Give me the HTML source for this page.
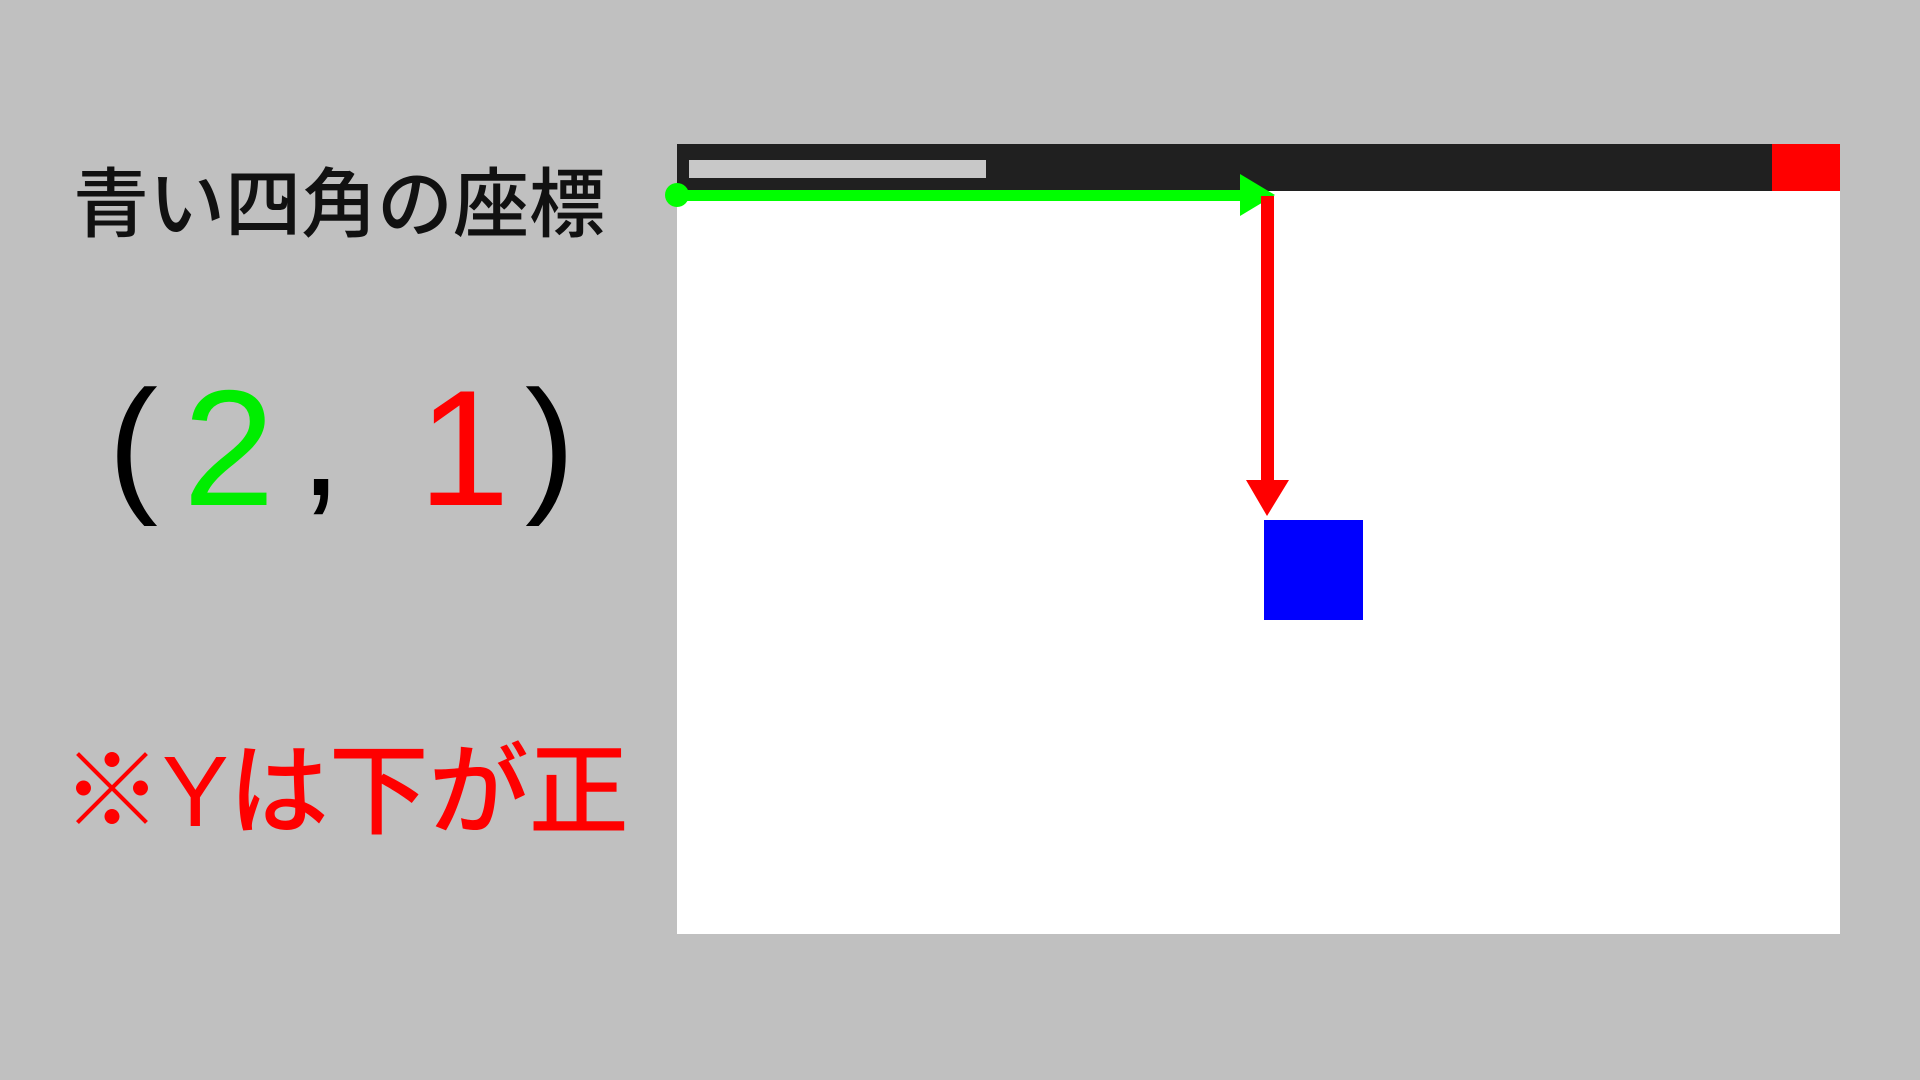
<!DOCTYPE html>
<html><head><meta charset="utf-8"><style>
html,body{margin:0;padding:0;}
body{width:1920px;height:1080px;background:#c0c0c0;position:relative;overflow:hidden;font-family:"Liberation Sans","Noto Sans CJK JP",sans-serif;}
.a{position:absolute;}
.c{position:absolute;line-height:1;white-space:nowrap;}
</style></head><body>
<div class="c" style="left:73px;top:160px;font-size:76px;color:#111;font-family:'Noto Sans CJK JP',sans-serif;font-weight:500;">青い四角の座標</div>
<div class="c" style="left:108px;top:368px;font-size:150px;color:#000;">(</div>
<div class="c" style="left:183px;top:366px;font-size:165px;color:#00ee00;">2</div>
<div class="c" style="left:300px;top:368px;font-size:150px;color:#000;">,</div>
<div class="c" style="left:418px;top:366px;font-size:165px;color:#ff0000;">1</div>
<div class="c" style="left:525px;top:368px;font-size:150px;color:#000;">)</div>
<div class="c" style="left:62px;top:742px;font-size:100px;color:#ff0000;font-family:'Liberation Sans','Noto Sans CJK JP',sans-serif;font-weight:500;">※Yは下が正</div>

<div class="a" style="left:677px;top:144px;width:1163px;height:790px;background:#fff;"></div>
<div class="a" style="left:677px;top:144px;width:1163px;height:47px;background:#202020;"></div>
<div class="a" style="left:1772px;top:144px;width:68px;height:47px;background:#ff0000;"></div>
<div class="a" style="left:689px;top:160px;width:297px;height:18px;background:#c8c8c8;"></div>
<div class="a" style="left:1264px;top:520px;width:99px;height:100px;background:#0000ff;"></div>
<svg class="a" style="left:0;top:0" width="1920" height="1080">
<circle cx="677" cy="195" r="12" fill="#00ff00"/>
<rect x="677" y="190" width="568" height="11" fill="#00ff00"/>
<polygon points="1240,174 1275,195 1240,216" fill="#00ff00"/>
<rect x="1261" y="196" width="13" height="290" fill="#ff0000"/>
<polygon points="1246,480 1289,480 1267,516" fill="#ff0000"/>
</svg>
</body></html>
